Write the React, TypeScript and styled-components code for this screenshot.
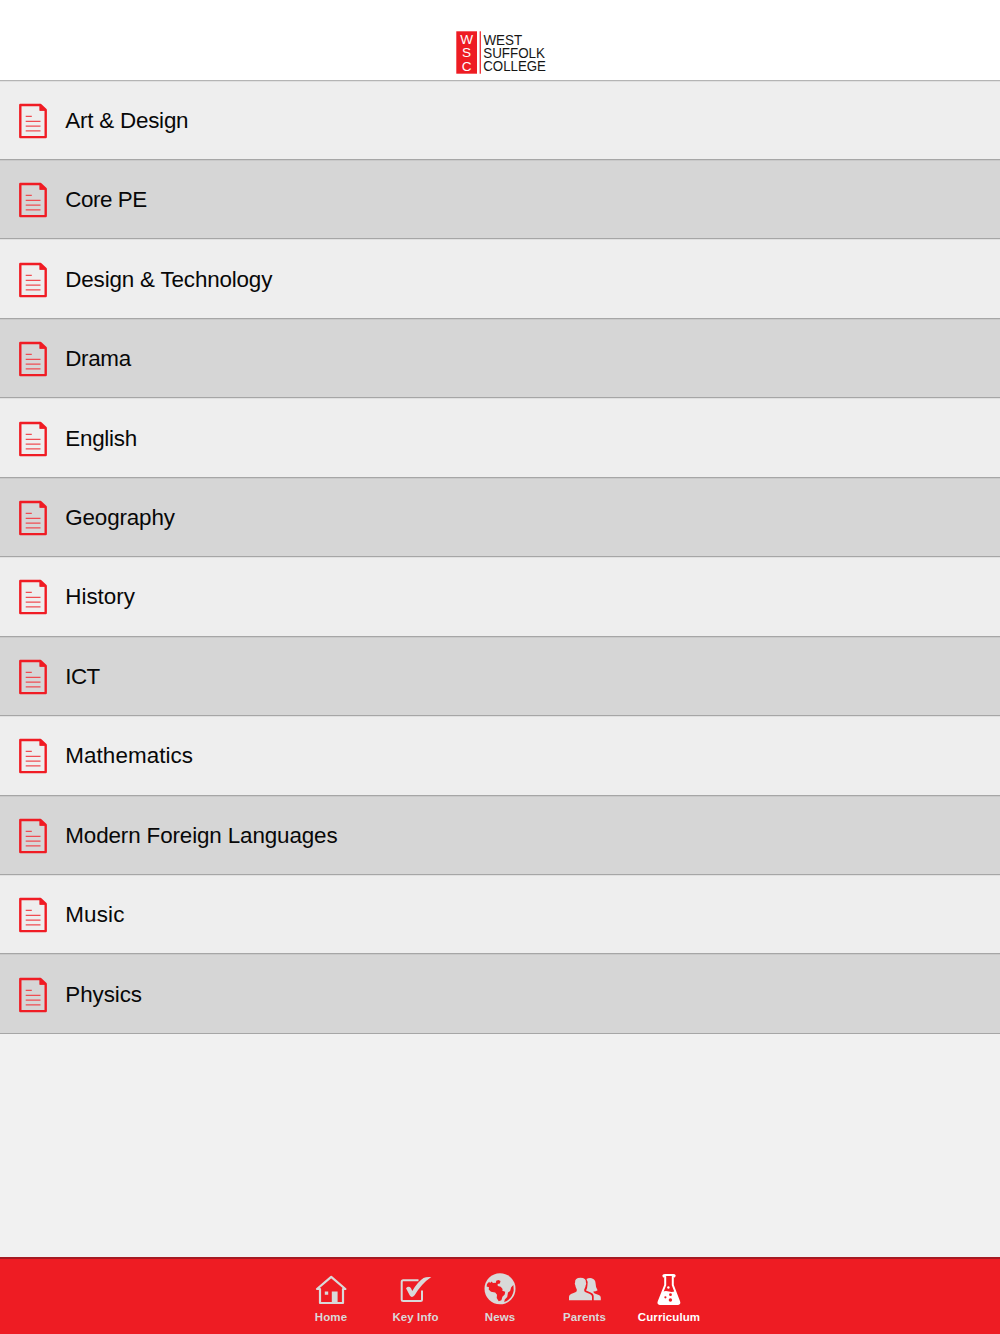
import React from "react";
import styled, { createGlobalStyle } from "styled-components";

const Global = createGlobalStyle`
  *{box-sizing:border-box}
  body{margin:0;background:#f1f1f1;font-family:"Liberation Sans",Arial,sans-serif;}
`;
const Screen = styled.div`height:1334px;display:flex;flex-direction:column;overflow:hidden;background:#f1f1f1;`;
const Header = styled.header`height:79.5px;flex:none;background:#fff;display:flex;justify-content:center;padding:28px 0 0 2px;`;
const List = styled.ul`list-style:none;margin:0;padding:0;flex:1;border-top:1px solid #b4b4b4;`;
const Row = styled.li<{ $dark: boolean }>`
  height:79.46px;display:flex;align-items:center;padding:2px 0 0 18px;gap:17.3px;
  background:${p => (p.$dark ? "#d6d6d6" : "#eeeeee")};border-bottom:1px solid #a6a6a6;
  box-shadow:inset 0 1px 0 rgba(0,0,0,.06);
`;
const Label = styled.span<{ $tracking: number }>`
  font-size:22.4px;line-height:26px;color:#080808;white-space:nowrap;letter-spacing:${p => p.$tracking}px;
`;
const TabBar = styled.nav`
  height:77px;flex:none;background:#ee1c23;border-top:2px solid #a51a22;display:flex;justify-content:center;
`;
const Tab = styled.a<{ $active?: boolean }>`
  width:84.5px;display:flex;flex-direction:column;align-items:center;padding-top:12px;
  color:${p => (p.$active ? "#fff" : "#d9d9d9")};
`;
const TabLabel = styled.span`font-size:11.5px;font-weight:700;line-height:14px;margin-top:2.5px;letter-spacing:.1px;`;

const Logo = () => (
  <svg width="96" height="50" viewBox="453 28 96 50" fontFamily="Liberation Sans, Arial, sans-serif">
    <rect x="456.3" y="31.3" width="20.7" height="42.4" fill="#ee1c23" />
    <rect x="479.6" y="31.3" width="1.4" height="42.4" fill="#ee3b40" />
    <g fill="#fff" fontSize="13.6" textAnchor="middle">
      <text x="466.6" y="44.3">W</text><text x="466.6" y="57.4">S</text><text x="466.6" y="70.8">C</text>
    </g>
    <g fill="#161616" fontSize="14.2">
      <text x="483.4" y="44.6" textLength="38.8" lengthAdjust="spacingAndGlyphs">WEST</text>
      <text x="483.2" y="57.6" textLength="61.8" lengthAdjust="spacingAndGlyphs">SUFFOLK</text>
      <text x="483.2" y="70.8" textLength="62.8" lengthAdjust="spacingAndGlyphs">COLLEGE</text>
    </g>
  </svg>
);

const DocIcon = () => (
  <svg width="30" height="36" viewBox="0 0 30 36" fill="none">
    <path d="M2.3 2H22.6L27.7 6.9V34.1H2.3Z" stroke="#f01c24" strokeWidth="2.4" strokeLinejoin="round" />
    <path d="M21.8 1.5V7.5H28Z" fill="#f01c24" stroke="#f01c24" strokeWidth=".8" />
    <path d="M7.7 13.4H13.8M7.7 18.3H22.5M7.7 23.1H22.5M7.7 27.8H22.5" stroke="#ef4c52" strokeWidth="1.3" />
  </svg>
);

const Icon = styled.svg.attrs({ width: 36, height: 36, viewBox: "0 0 36 36" })`flex:none;color:inherit;`;

const HomeIcon = () => (
  <Icon fill="none" stroke="currentColor" strokeWidth="2.2" strokeLinejoin="round" strokeLinecap="round">
    <path d="M7 18V32H30V18M7 18L4 18L18.2 5.8L32.4 18H30" />
    <path d="M11.8 20.4H15.2V23.8H11.8ZM18.8 20.6H24.6V32H18.8Z" fill="currentColor" stroke="none" />
  </Icon>
);
const CheckIcon = () => (
  <Icon>
    <path d="M20.5 9.3H5.2Q3.7 9.3 3.7 10.8V28.5Q3.7 30 5.2 30H22.5Q24 30 24 28.5V19.5" fill="none" stroke="currentColor" strokeWidth="2" />
    <path d="M8 17.2Q10.6 14.6 12.9 17L14.3 20Q19 11.3 25.5 6.9Q28 5.7 33.3 6Q23.8 12.3 16.6 24.3Q13.8 27.4 11.8 24.6Z" fill="currentColor" />
  </Icon>
);
const GlobeIcon = () => (
  <Icon>
    <circle cx="18" cy="17.8" r="15.5" fill="currentColor" />
    <g fill="#ee1c23">
      <path d="M5 13L7.2 10.8L8 12L9.8 10.4L10.8 12L14 11.7L14.2 9.8L16.5 9L18.5 10L17.9 12.5L15.6 13.1L15.8 15L18.7 15.8L20.6 18L20.3 19.7L23.2 20.8L22.7 23.6L20.4 25.8L19.4 29.2L16.7 30.2L14.7 27L15 23.7L13.2 21.4L9 20.8L6.7 18.6L7 16.3L4.6 15.5Z" />
      <path d="M31.4 14L29.2 16.2L28.1 20L26 21.5L25.2 26L22.8 28.4L22.2 31Q30.5 28 31.7 19.5Z" />
    </g>
  </Icon>
);
const PeopleIcon = () => (
  <Icon fill="currentColor">
    <path d="M2 29.3V25.8Q2 23.7 4 22.9L8.4 21.2Q10.3 20.3 9.8 18.4Q8.5 16.6 8.3 14.2Q7.3 12.6 8.1 11.2Q7.7 6.7 13.5 6.7T18.9 11.2Q19.7 12.6 18.7 14.2Q18.5 16.6 17.2 18.4Q16.7 20.3 18.6 21.2L23 22.9Q25 23.7 25 25.8V29.3Z" />
    <path d="M19.5 8Q21.6 6.8 24.6 7.2Q28.4 8.2 28.6 12.5Q28.6 16.7 30.6 19.3Q29 20.6 26.4 20.6Q26.2 21.8 27.7 22.5L31.8 24Q33.8 24.8 33.8 26.7V29.3H26.7V25.5Q26.7 22.5 23.7 21.4L19 19.6Q20.4 17.2 20.4 14.6Q21.5 11 19.5 8Z" />
  </Icon>
);
const FlaskIcon = () => (
  <Icon>
    <path d="M14.2 6V14L7.7 30.5Q6.8 33 9 33H26.8Q29 33 28.1 30.5L21.8 14V6Q23.7 5.8 23.7 4.8T22 3.9H14Q12.3 3.9 12.3 4.8T14.2 6Z" fill="none" stroke="currentColor" strokeWidth="2" />
    <path d="M11.8 20.5Q15 19.5 18 20.5T24.2 20L28.7 32Q28.5 33.5 27 33.5H9Q7.3 33.5 7.3 32Z" fill="currentColor" />
    <circle cx="17.4" cy="16.5" r="1.2" fill="currentColor" />
    <g fill="#ee1c23"><circle cx="14.4" cy="26.3" r="1.1" /><circle cx="19.5" cy="23.7" r="1.4" /><circle cx="19.4" cy="29" r="1.7" /></g>
  </Icon>
);

const subjects: [string, number][] = [
  ["Art & Design", -0.22], ["Core PE", -0.45], ["Design & Technology", -0.16], ["Drama", -0.35], ["English", -0.27],
  ["Geography", -0.15], ["History", -0.01], ["ICT", -0.6], ["Mathematics", 0.08], ["Modern Foreign Languages", -0.12],
  ["Music", 0.14], ["Physics", -0.07],
];
const tabs = [
  { name: "Home", Glyph: HomeIcon }, { name: "Key Info", Glyph: CheckIcon }, { name: "News", Glyph: GlobeIcon },
  { name: "Parents", Glyph: PeopleIcon }, { name: "Curriculum", Glyph: FlaskIcon, active: true },
];

export default function App() {
  return (
    <Screen>
      <Global />
      <Header><Logo /></Header>
      <List>
        {subjects.map(([s, t], i) => (
          <Row key={s} $dark={i % 2 === 1}><DocIcon /><Label $tracking={t}>{s}</Label></Row>
        ))}
      </List>
      <TabBar>
        {tabs.map(({ name, Glyph, active }) => (
          <Tab key={name} $active={active}><Glyph /><TabLabel>{name}</TabLabel></Tab>
        ))}
      </TabBar>
    </Screen>
  );
}
